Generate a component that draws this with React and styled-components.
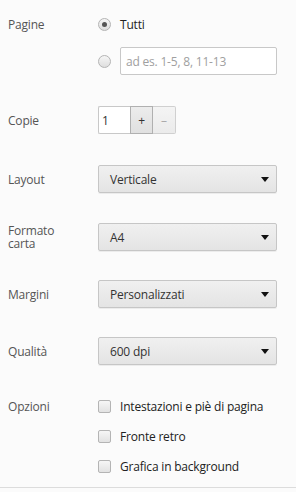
import React from "react"
import styled, { createGlobalStyle } from "styled-components"

const GlobalStyle = createGlobalStyle`
  html, body {
    margin: 0;
    padding: 0;
    background: #fbfbfb;
  }
  body {
    font-family: "Open Sans", "Noto Sans", sans-serif;
    font-size: 12px;
    letter-spacing: -0.2px;
    color: #333;
  }
`

const Panel = styled.div`
  width: 296px;
  height: 488px;
  box-sizing: border-box;
  padding: 10px 19px 0 8px;
  display: flex;
  flex-direction: column;
  border-bottom: 1px solid #dcdcdc;
`

const Section = styled.div`
  display: flex;
  align-items: flex-start;
  margin-top: ${(p) => p.$top || 0}px;
`

const Label = styled.div`
  width: 62px;
  flex: none;
  margin-right: 28px;
  color: #555;
  line-height: 13px;
  min-height: 28px;
  display: flex;
  align-items: center;
`

const Controls = styled.div`
  flex: 1;
  display: flex;
  flex-direction: column;
  gap: ${(p) => p.$gap || 0}px;
`

const Row = styled.label`
  display: flex;
  align-items: center;
  height: 28px;
  gap: 9px;
  color: #222;
`

const Radio = styled.span`
  width: 13px;
  height: 13px;
  flex: none;
  box-sizing: border-box;
  border-radius: 50%;
  border: 1px solid #b4b4b4;
  background: linear-gradient(#f6f6f6, #dedede);
  display: flex;
  align-items: center;
  justify-content: center;

  &::after {
    content: "";
    width: 5px;
    height: 5px;
    border-radius: 50%;
    background: ${(p) => (p.$checked ? "#555" : "transparent")};
  }
`

const Checkbox = styled.span`
  width: 13px;
  height: 13px;
  flex: none;
  box-sizing: border-box;
  border-radius: 2px;
  border: 1px solid #b4b4b4;
  background: linear-gradient(#f6f6f6, #e2e2e2);
`

const TextInput = styled.div`
  flex: 1;
  height: 28px;
  box-sizing: border-box;
  border: 1px solid #c8c8c8;
  border-radius: 2px;
  background: #fff;
  padding: 0 5px;
  display: flex;
  align-items: center;
  color: ${(p) => (p.$placeholder ? "#a0a0a0" : "#333")};
`

const Spinner = styled.div`
  display: flex;
  height: 28px;
`

const CopiesInput = styled(TextInput)`
  flex: none;
  width: 32px;
  padding: 0 3px;
  border-radius: 2px 0 0 2px;
  border-right: none;
`

const StepButton = styled.div`
  width: 23px;
  height: 28px;
  box-sizing: border-box;
  display: flex;
  align-items: center;
  justify-content: center;
  border: 1px solid ${(p) => (p.$active ? "#b0b0b0" : "#d0d0d0")};
  border-left: ${(p) => (p.$active ? "1px solid #b0b0b0" : "none")};
  border-radius: ${(p) => (p.$last ? "0 2px 2px 0" : "0")};
  background: ${(p) =>
    p.$active ? "linear-gradient(#ececec, #e0e0e0)" : "linear-gradient(#f4f4f4, #ebebeb)"};
  color: ${(p) => (p.$active ? "#333" : "#aaa")};
  font-size: 12px;
`

const Select = styled.div`
  width: 179px;
  height: 28px;
  box-sizing: border-box;
  border: 1px solid #c6c6c6;
  border-radius: 2px;
  background: linear-gradient(#f0f0f0, #e4e4e4);
  box-shadow: 0 1px 0 rgba(0, 0, 0, 0.06);
  display: flex;
  align-items: center;
  justify-content: space-between;
  padding: 0 7px 0 11px;
  color: #333;
`

const Arrow = styled.span`
  width: 0;
  height: 0;
  border-left: 4px solid transparent;
  border-right: 4px solid transparent;
  border-top: 5px solid #111;
`

const Dropdown = ({ value }) => (
  <Select>
    {value}
    <Arrow />
  </Select>
)

export default function App() {
  return (
    <>
      <GlobalStyle />
      <Panel>
        <Section>
          <Label>Pagine</Label>
          <Controls $gap={9}>
            <Row>
              <Radio $checked />
              Tutti
            </Row>
            <Row>
              <Radio />
              <TextInput $placeholder>ad es. 1-5, 8, 11-13</TextInput>
            </Row>
          </Controls>
        </Section>

        <Section $top={31}>
          <Label>Copie</Label>
          <Spinner>
            <CopiesInput>1</CopiesInput>
            <StepButton $active>+</StepButton>
            <StepButton $last>–</StepButton>
          </Spinner>
        </Section>

        <Section $top={31}>
          <Label>Layout</Label>
          <Dropdown value="Verticale" />
        </Section>

        <Section $top={30}>
          <Label>Formato carta</Label>
          <Dropdown value="A4" />
        </Section>

        <Section $top={29}>
          <Label>Margini</Label>
          <Dropdown value="Personalizzati" />
        </Section>

        <Section $top={29}>
          <Label>Qualità</Label>
          <Dropdown value="600 dpi" />
        </Section>

        <Section $top={27}>
          <Label>Opzioni</Label>
          <Controls $gap={2}>
            <Row>
              <Checkbox />
              Intestazioni e piè di pagina
            </Row>
            <Row>
              <Checkbox />
              Fronte retro
            </Row>
            <Row>
              <Checkbox />
              Grafica in background
            </Row>
          </Controls>
        </Section>
      </Panel>
    </>
  )
}
